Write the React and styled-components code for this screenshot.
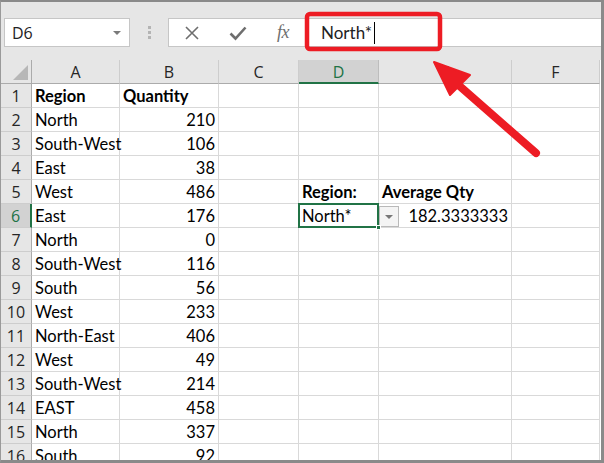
import React from "react";
import styled, { createGlobalStyle } from "styled-components";

const Global = createGlobalStyle`
  html, body { margin: 0; padding: 0; background: #ffffff; }
  * { box-sizing: border-box; }
`;

const GREEN = "#217346";

const Frame = styled.div`
  position: relative;
  width: 604px;
  height: 463px;
  overflow: hidden;
  display: flex;
  flex-direction: column;
  background: #ffffff;
  border-top: 2px solid #8a8a8a;
  border-left: 1px solid #9a9a9a;
  border-right: 3px solid #8a8a8a;
  border-bottom: 3px solid #8a8a8a;
`;

const Toolbar = styled.div`
  height: 58px;
  flex: none;
  display: flex;
  align-items: flex-start;
  padding: 16px 0 0 3px;
  background: #e6e6e6;
`;

const NameBox = styled.div`
  width: 126px;
  height: 29px;
  display: flex;
  align-items: center;
  justify-content: space-between;
  padding: 0 8px 0 7px;
  background: #ffffff;
  border: 1px solid #c6c6c6;
  font-family: "Open Sans", "Noto Sans", sans-serif;
  font-size: 16px;
  color: #222;
`;

const Caret = styled.span`
  width: 0;
  height: 0;
  border-left: 4px solid transparent;
  border-right: 4px solid transparent;
  border-top: 4px solid #7a7a7a;
`;

const Grip = styled.div`
  width: 38px;
  height: 29px;
  display: flex;
  flex-direction: column;
  align-items: center;
  justify-content: center;
  gap: 2px;
`;

const Dot = styled.span`
  width: 3px;
  height: 3px;
  background: #b4b4b4;
`;

const FormulaBox = styled.div`
  flex: 1;
  height: 29px;
  display: flex;
  align-items: center;
  background: #ffffff;
  border: 1px solid #c6c6c6;
  border-right: none;
  padding-left: 12px;
`;

const IconBtn = styled.span`
  width: ${(p) => p.$w}px;
  height: 27px;
  display: flex;
  align-items: center;
  justify-content: center;
  color: #6e6e6e;
`;

const Fx = styled.span`
  font-family: "Liberation Serif", "DejaVu Serif", serif;
  font-style: italic;
  font-size: 18px;
  color: #6e6e6e;
  letter-spacing: -0.5px;
`;

const FormulaText = styled.span`
  margin-left: 28px;
  font-family: Lato, "Open Sans", sans-serif;
  font-size: 17px;
  color: #222;
  display: flex;
  align-items: center;
`;

const Cursor = styled.span`
  display: inline-block;
  width: 1px;
  height: 22px;
  margin-left: 2px;
  background: #000;
`;

const Sheet = styled.div`
  display: grid;
  grid-template-columns: 31px 88px 99px 80px 80px 133px 88px;
  grid-auto-rows: 24px;
  flex: none;
`;

const Corner = styled.div`
  position: relative;
  background: #e6e6e6;
  border-right: 1px solid #ababab;
  border-bottom: 1px solid #ababab;
  &::after {
    content: "";
    position: absolute;
    right: 3px;
    bottom: 3px;
    width: 0;
    height: 0;
    border-left: 15px solid transparent;
    border-bottom: 15px solid #b7b7b7;
  }
`;

const ColHead = styled.div`
  display: flex;
  align-items: center;
  justify-content: center;
  background: ${(p) => (p.$active ? "#d2d2d2" : "#e6e6e6")};
  border-right: 1px solid ${(p) => (p.$active ? "#bdbdbd" : "#cdcdcd")};
  border-bottom: ${(p) => (p.$active ? `2px solid ${GREEN}` : "1px solid #ababab")};
  font-family: "Open Sans", "Noto Sans", sans-serif;
  font-size: 16px;
  color: ${(p) => (p.$active ? GREEN : "#262626")};
  padding-top: ${(p) => (p.$active ? "1px" : "0")};
`;

const RowHead = styled.div`
  display: flex;
  align-items: center;
  justify-content: center;
  background: ${(p) => (p.$active ? "#d2d2d2" : "#e6e6e6")};
  border-right: ${(p) => (p.$active ? `2px solid ${GREEN}` : "1px solid #ababab")};
  border-bottom: 1px solid #cdcdcd;
  font-family: "Open Sans", "Noto Sans", sans-serif;
  font-size: 16px;
  color: ${(p) => (p.$active ? GREEN : "#262626")};
`;

const Cell = styled.div`
  position: relative;
  display: flex;
  align-items: center;
  justify-content: ${(p) => (p.$num ? "flex-end" : "flex-start")};
  padding: 0 ${(p) => (p.$num ? "3px" : "0")} 0 ${(p) => (p.$num ? "0" : "3px")};
  border-right: 1px solid #d9d9d9;
  border-bottom: 1px solid #d9d9d9;
  font-family: Lato, "Open Sans", sans-serif;
  font-size: 16.5px;
  font-weight: ${(p) => (p.$bold ? 700 : 400)};
  color: #000;
  white-space: nowrap;
  overflow: visible;
`;

const SelectedCell = styled(Cell)`
  &::after {
    content: "";
    position: absolute;
    left: -1px;
    top: -1px;
    right: -1px;
    bottom: -1px;
    border: 2px solid ${GREEN};
    pointer-events: none;
  }
`;

const FillHandle = styled.span`
  position: absolute;
  right: -3px;
  bottom: -3px;
  width: 5px;
  height: 5px;
  background: ${GREEN};
  border: 1px solid #fff;
  z-index: 2;
`;

const DropBtn = styled.span`
  position: absolute;
  left: calc(100% + 1px);
  top: 2px;
  width: 20px;
  height: 21px;
  display: flex;
  align-items: center;
  justify-content: center;
  background: #f4f4f4;
  border: 1px solid #b9b9b9;
  z-index: 2;
`;

const SmallCaret = styled.span`
  width: 0;
  height: 0;
  border-left: 4px solid transparent;
  border-right: 4px solid transparent;
  border-top: 4px solid #777;
`;

const Overlay = styled.svg`
  position: absolute;
  left: -1px;
  top: -2px;
  width: 604px;
  height: 463px;
  pointer-events: none;
  z-index: 5;
`;

const rows = [
  [{ t: "Region", b: true }, { t: "Quantity", b: true }],
  ["North", "210"],
  ["South-West", "106"],
  ["East", "38"],
  ["West", "486"],
  ["East", "176"],
  ["North", "0"],
  ["South-West", "116"],
  ["South", "56"],
  ["West", "233"],
  ["North-East", "406"],
  ["West", "49"],
  ["South-West", "214"],
  ["EAST", "458"],
  ["North", "337"],
  ["South", "92"],
];

const cols = ["A", "B", "C", "D", "E", "F"];

function renderRow(r, i) {
  const n = i + 1;
  const [a, b] = r;
  const aObj = typeof a === "string" ? { t: a } : a;
  const bObj = typeof b === "string" ? { t: b } : b;
  const cells = [];
  cells.push(
    <RowHead key={`h${n}`} $active={n === 6}>
      {n}
    </RowHead>
  );
  cells.push(
    <Cell key={`a${n}`} $bold={aObj.b}>
      {aObj.t}
    </Cell>
  );
  cells.push(
    <Cell key={`b${n}`} $bold={bObj.b} $num={!bObj.b}>
      {bObj.t}
    </Cell>
  );
  cells.push(<Cell key={`c${n}`} />);
  if (n === 5) {
    cells.push(
      <Cell key={`d${n}`} $bold>
        Region:
      </Cell>
    );
    cells.push(
      <Cell key={`e${n}`} $bold>
        Average Qty
      </Cell>
    );
  } else if (n === 6) {
    cells.push(
      <SelectedCell key={`d${n}`}>
        North*
        <DropBtn>
          <SmallCaret />
        </DropBtn>
        <FillHandle />
      </SelectedCell>
    );
    cells.push(
      <Cell key={`e${n}`} $num>
        182.3333333
      </Cell>
    );
  } else {
    cells.push(<Cell key={`d${n}`} />);
    cells.push(<Cell key={`e${n}`} />);
  }
  cells.push(<Cell key={`f${n}`} />);
  return cells;
}

export default function App() {
  return (
    <>
      <Global />
      <Frame>
        <Toolbar>
          <NameBox>
            D6
            <Caret />
          </NameBox>
          <Grip>
            <Dot />
            <Dot />
            <Dot />
          </Grip>
          <FormulaBox>
            <IconBtn $w={22}>
              <svg width="16" height="16" viewBox="0 0 16 16">
                <path d="M2 2 L14 14 M14 2 L2 14" stroke="#6e6e6e" strokeWidth="1.6" fill="none" />
              </svg>
            </IconBtn>
            <IconBtn $w={70}>
              <svg width="18" height="16" viewBox="0 0 18 16">
                <path d="M1.5 8.5 L6.5 13.5 L16.5 2.5" stroke="#6e6e6e" strokeWidth="2.6" fill="none" />
              </svg>
            </IconBtn>
            <IconBtn $w={20}>
              <Fx>fx</Fx>
            </IconBtn>
            <FormulaText>
              North*
              <Cursor />
            </FormulaText>
          </FormulaBox>
        </Toolbar>
        <Sheet>
          <Corner />
          {cols.map((c) => (
            <ColHead key={c} $active={c === "D"}>
              {c}
            </ColHead>
          ))}
          {rows.map(renderRow)}
        </Sheet>
        <Overlay viewBox="0 0 604 463">
          <rect x="307" y="14" width="133" height="35" rx="3" fill="none" stroke="#ed1c24" strokeWidth="4.5" />
          <line x1="536" y1="153" x2="455" y2="82" stroke="#ed1c24" strokeWidth="8" strokeLinecap="round" />
          <polygon points="434,62 450,95 470,75" fill="#ed1c24" stroke="#ed1c24" strokeWidth="2" strokeLinejoin="round" />
        </Overlay>
      </Frame>
    </>
  );
}
